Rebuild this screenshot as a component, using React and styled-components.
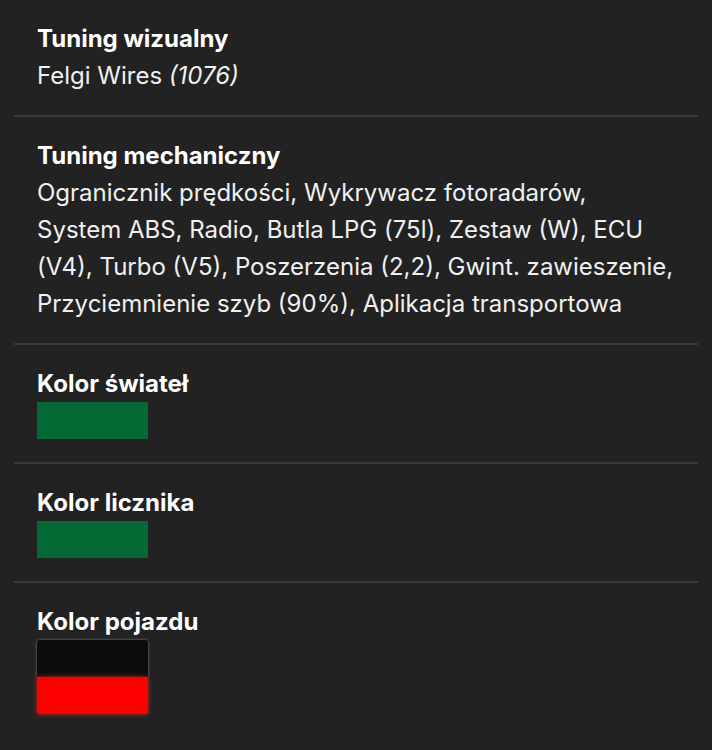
import React from 'react'
import styled, { createGlobalStyle } from 'styled-components'

const GlobalStyle = createGlobalStyle`
  html, body {
    margin: 0;
    padding: 0;
    background: #222222;
  }
  body {
    font-family: Inter, "Noto Sans", sans-serif;
    color: #f2f2f2;
  }
`

const sections = [
  { title: 'Tuning wizualny', kind: 'visual' },
  {
    title: 'Tuning mechaniczny',
    kind: 'text',
    text:
      'Ogranicznik prędkości, Wykrywacz fotoradarów, System ABS, Radio, Butla LPG (75l), Zestaw (W), ECU (V4), Turbo (V5), Poszerzenia (2,2), Gwint. zawieszenie, Przyciemnienie szyb (90%), Aplikacja transportowa',
  },
  { title: 'Kolor świateł', kind: 'colors', colors: ['#036a35'] },
  { title: 'Kolor licznika', kind: 'colors', colors: ['#036a35'] },
  { title: 'Kolor pojazdu', kind: 'colors', colors: ['#0c0c0c', '#ff0000'], glow: true },
]

function App() {
  return (
    <Page>
      <GlobalStyle />
      {sections.map((s, i) => (
        <Section
          key={s.title}
          last={i === sections.length - 1}
          swatch={s.kind === 'colors'}
        >
          <Title>{s.title}</Title>
          {s.kind === 'visual' && (
            <Body>
              Felgi Wires <Muted>(1076)</Muted>
            </Body>
          )}
          {s.kind === 'text' && <Body>{s.text}</Body>}
          {s.kind === 'colors' && (
            <Swatches>
              {s.colors.map((c, j) => (
                <Swatch
                  key={j}
                  color={c}
                  glow={s.glow}
                  first={j === 0}
                  lastOne={j === s.colors.length - 1}
                />
              ))}
            </Swatches>
          )}
        </Section>
      ))}
    </Page>
  )
}

export default App

const Page = styled.div`
  width: 712px;
  min-height: 750px;
  padding: 0 14px;
  box-sizing: border-box;
  background: #222222;
`

const Section = styled.div`
  padding: 21px 23px ${(p) => (p.last ? '30px' : p.swatch ? '23px' : '21px')};
  border-bottom: ${(p) => (p.last ? 'none' : '2px solid #393939')};
`

const Title = styled.div`
  font-size: 24px;
  font-weight: 700;
  line-height: 36px;
  color: #ffffff;
`

const Body = styled.div`
  font-size: 24px;
  font-weight: 400;
  line-height: 37px;
  color: #f0f0f0;
`

const Muted = styled.i`
  font-style: italic;
`

const Swatches = styled.div`
  display: flex;
  flex-direction: column;
  width: 111px;
`

const Swatch = styled.div`
  height: 37px;
  background: ${(p) => p.color};
  position: relative;
  border-radius: ${(p) =>
    p.glow ? `${p.first ? '3px 3px' : '0 0'} ${p.lastOne ? '3px 3px' : '0 0'}` : '0'};
  box-shadow: ${(p) =>
    p.glow
      ? p.color === '#ff0000'
        ? '0 0 5px rgba(255, 40, 40, 0.75)'
        : '0 0 3px rgba(150, 150, 150, 0.8)'
      : 'none'};
`
